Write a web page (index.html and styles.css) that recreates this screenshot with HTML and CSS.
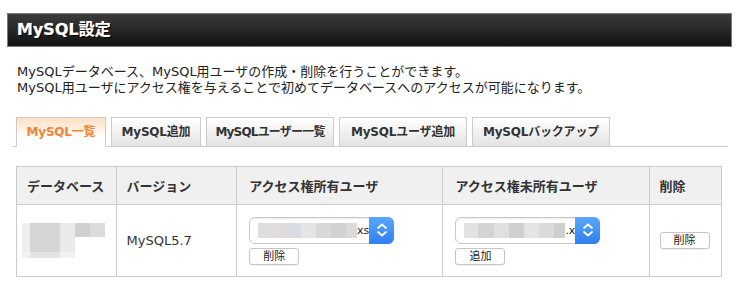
FILE: index.html
```html
<!DOCTYPE html>
<html lang="ja">
<head>
    <meta charset="UTF-8">
    <title>MySQL設定</title>
    <link rel="stylesheet" href="styles.css">
</head>
<body>
    <div class="page">
        <h1 class="title-bar">MySQL設定</h1>

        <p class="intro">MySQLデータベース、MySQL用ユーザの作成・削除を行うことができます。<br>MySQL用ユーザにアクセス権を与えることで初めてデータベースへのアクセスが可能になります。</p>

        <ul class="tabs">
            <li class="tab tab-list active">MySQL一覧</li>
            <li class="tab tab-add">MySQL追加</li>
            <li class="tab tab-users">MySQLユーザー一覧</li>
            <li class="tab tab-user-add">MySQLユーザ追加</li>
            <li class="tab tab-backup">MySQLバックアップ</li>
        </ul>

        <table class="db-table">
            <thead>
                <tr>
                    <th class="col-db">データベース</th>
                    <th class="col-ver">バージョン</th>
                    <th class="col-user">アクセス権所有ユーザ</th>
                    <th class="col-user">アクセス権未所有ユーザ</th>
                    <th class="col-del">削除</th>
                </tr>
            </thead>
            <tbody>
                <tr>
                    <td class="col-db">
                        <div class="mosaic">
                            <span class="m1"></span><span class="m2"></span><span class="m3"></span><span class="m4"></span><span class="m5"></span>
                            <span class="m1"></span><span class="m2"></span><span class="m3"></span><span></span><span></span>
                            <span class="m6"></span><span class="m7"></span><span class="m6"></span><span></span><span></span>
                        </div>
                    </td>
                    <td class="col-ver">MySQL5.7</td>
                    <td class="col-user">
                        <div class="select">
                            <span class="select-value"><span class="blur"></span>xs</span>
                            <span class="select-arrow">
                                <svg width="12" height="16" viewBox="0 0 12 16"><path d="M2 6 L6 2.5 L10 6 M2 10 L6 13.5 L10 10" fill="none" stroke="#fff" stroke-width="1.8" stroke-linecap="round" stroke-linejoin="round"/></svg>
                            </span>
                        </div>
                        <button class="small-btn">削除</button>
                    </td>
                    <td class="col-user">
                        <div class="select">
                            <span class="select-value"><span class="blur alt"></span>.x</span>
                            <span class="select-arrow">
                                <svg width="12" height="16" viewBox="0 0 12 16"><path d="M2 6 L6 2.5 L10 6 M2 10 L6 13.5 L10 10" fill="none" stroke="#fff" stroke-width="1.8" stroke-linecap="round" stroke-linejoin="round"/></svg>
                            </span>
                        </div>
                        <button class="small-btn">追加</button>
                    </td>
                    <td class="col-del">
                        <button class="small-btn">削除</button>
                    </td>
                </tr>
            </tbody>
        </table>
    </div>
</body>
</html>
```

FILE: styles.css
```css
body {
    margin: 0;
    font-family: "DejaVu Sans", "Noto Sans CJK JP", sans-serif;
    color: #222;
    background-color: #fff;
}

.page {
    padding: 13px 8px 0 7px;
}

.title-bar {
    margin: 0;
    height: 32px;
    line-height: 32px;
    padding-left: 9px;
    border: 1px solid #7a7a7a;
    background-image: linear-gradient(#3b3b3b, #121212);
    color: #fff;
    font-size: 16px;
    font-weight: bold;
    text-shadow: 1px 1px 1px #000, 0 0 1px #fff;
}

.intro {
    margin: 17px 0 0;
    padding-left: 10px;
    font-size: 13px;
    line-height: 16px;
    color: #222;
}

.tabs {
    list-style: none;
    display: flex;
    gap: 5px;
    margin: 21px 4px 0 5px;
    padding: 0 0 0 4px;
    border-bottom: 1px solid #ccc;
}

.tab {
    box-sizing: border-box;
    height: 29px;
    line-height: 29px;
    border: 1px solid #ccc;
    border-bottom: none;
    background-image: linear-gradient(#fff, #e3e3e3);
    color: #333;
    font-size: 12px;
    font-weight: bold;
    text-align: center;
    white-space: nowrap;
    letter-spacing: -0.2px;
}

.tab-list { width: 90px; }
.tab-add { width: 90px; }
.tab-users { width: 128px; letter-spacing: -0.8px; }
.tab-user-add { width: 128px; }
.tab-backup { width: 138px; }

.tab.active {
    background-image: linear-gradient(#fde0c2, #fff 70%);
    color: #f0843a;
    margin-bottom: -1px;
    height: 30px;
}

.db-table {
    margin: 19px 0 0 9px;
    width: 706px;
    border-collapse: collapse;
    border: 1px solid #ccc;
}

.db-table th,
.db-table td {
    border: 1px solid #ccc;
    text-align: left;
    padding: 0 10px;
}

.db-table th {
    height: 37px;
    background-color: #f0f0f0;
    color: #333;
    font-size: 13px;
    font-weight: bold;
}

.db-table td {
    height: 71px;
    font-size: 13px;
    color: #333;
}

.db-table .col-db { width: 78px; }
.db-table td.col-db { padding-left: 5px; }
.db-table .col-ver { width: 99px; }
.db-table .col-user { width: 182px; padding-left: 12px; }
.db-table .col-del { width: 51px; }

.mosaic {
    display: grid;
    grid-template-columns: 8px 30px 15px 15px 15px;
    grid-template-rows: 14px 15px 6px;
    width: 83px;
}

.mosaic span { display: block; }
.mosaic .m1 { background-color: #eeeeee; }
.mosaic .m2 { background-color: #d6d6d6; }
.mosaic .m3 { background-color: #eaeaea; }
.mosaic .m4 { background-color: #d0d0d0; }
.mosaic .m5 { background-color: #dcdcdc; }
.mosaic .m6 { background-color: #f1f1f1; }
.mosaic .m7 { background-color: #e3e3e3; }

.select {
    display: flex;
    width: 145px;
    height: 27px;
    box-sizing: border-box;
    border: 1px solid #c8c8c8;
    border-radius: 6px;
    background-color: #fff;
    box-shadow: inset 0 1px 1px rgba(0, 0, 0, 0.08);
}

.select-value {
    flex: 1;
    display: flex;
    align-items: center;
    padding-left: 8px;
    font-size: 11px;
    color: #222;
    overflow: hidden;
}

.blur {
    display: inline-block;
    width: 103px;
    height: 15px;
    background-image: linear-gradient(to right,
        #dedede 0 13px, #e0dcdc 13px 28px, #d9dce2 28px 43px,
        #e4e4e4 43px 58px, #d8d8d8 58px 73px, #d2d2d2 73px 88px, #dadada 88px);
}

.blur.alt {
    width: 105px;
    background-image: linear-gradient(to right,
        #e2e2e2 0 14px, #d4d4d4 14px 30px, #e0e0e0 30px 45px,
        #d0d0d0 45px 60px, #e4e4e4 60px 75px, #dadada 75px 90px, #cfcfcf 90px);
}

.select-arrow {
    width: 25px;
    margin: -1px -1px -1px 0;
    display: flex;
    align-items: center;
    justify-content: center;
    border-radius: 0 6px 6px 0;
    background-image: linear-gradient(#5aa8fa, #2f7ef0);
}

.small-btn {
    display: block;
    margin-top: 4px;
    width: 50px;
    height: 17px;
    padding: 0;
    border: 1px solid #c6c6c6;
    border-radius: 3px;
    background-color: #fff;
    font-family: "DejaVu Sans", "Noto Sans CJK JP", sans-serif;
    font-size: 11px;
    line-height: 15px;
    color: #222;
    box-shadow: 0 1px 1px rgba(0, 0, 0, 0.06);
}

.col-del .small-btn {
    margin-top: 0;
}
```
